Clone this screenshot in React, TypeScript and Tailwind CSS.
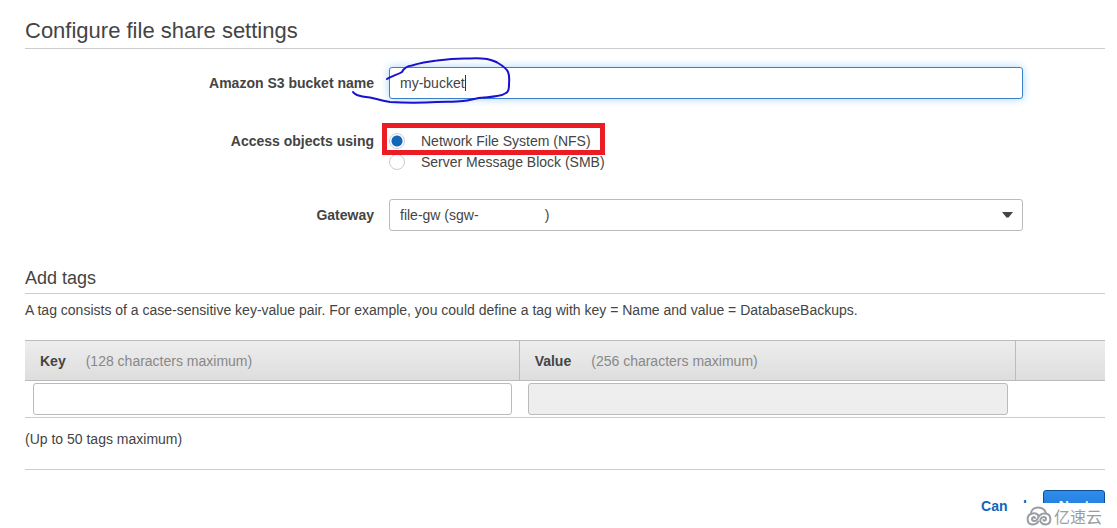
import { useState } from 'react';
import type { ReactNode } from 'react';

interface FieldRowProps {
  label: string;
  htmlFor?: string;
  id?: string;
  children: ReactNode;
}

const protocols = [
  { value: 'nfs', label: 'Network File System (NFS)' },
  { value: 'smb', label: 'Server Message Block (SMB)' },
];

const gateways = ['file-gw (sgw-' + '\u00a0'.repeat(17) + ')'];

function FieldRow({ label, htmlFor, id, children }: FieldRowProps) {
  return (
    <div className="flex gap-[15px] pr-[82px]">
      <label
        id={id}
        htmlFor={htmlFor}
        className="w-[349px] shrink-0 text-right font-bold leading-8"
      >
        {label}
      </label>
      <div className="relative min-w-0 flex-1">{children}</div>
    </div>
  );
}

function PenCircle() {
  return (
    <svg
      className="pointer-events-none absolute -left-10 -top-3 h-[56px] w-[170px]"
      viewBox="0 0 170 56"
      fill="none"
      stroke="#1a10d0"
      strokeWidth="2"
      strokeLinecap="round"
      strokeLinejoin="round"
    >
      <path d="M38 24 C43 21 50 19 53 17 C55 13 58 11 63 10.5 C71 8 79 6.5 88 5.5 C99 4 110 3 121 3.5 C128 3 134 3.5 138 4 C142 5 146 6 149 8 C154 11 158 14 159 17 C161 21 160 26 160 30 C160 34 159 37 157 38 C154 40 151 41 148 41 C143 42 139 42 134 42.5 C127 43 121 45.5 114 46 C105 47 97 46.5 88 47 C72 48 57 48 41 47 C34 46 28 44 21 42.5 C16 42 12 41.5 8 40 C6 39 5 38.5 4 37" />
    </svg>
  );
}

function Watermark() {
  return (
    <div className="absolute bottom-0 right-0 flex h-[25px] w-[109px] items-center bg-white pl-[18px] text-[#9a9da3]">
      <svg
        className="h-5 w-[26px]"
        viewBox="0 0 26 20"
        fill="none"
        stroke="currentColor"
        strokeWidth="2"
        strokeLinecap="round"
      >
        <path d="M5 8 C5 4 8 1.5 12 1.5 C16 1.5 19 4 20 7" />
        <path d="M9 12 C9 10.5 6 10.5 6 13 C6 15.5 10 16 11.5 13 C13 9 16 7 19.5 7.5 C26 8.5 26 18 19.5 18.5 C15.5 18.5 13.5 15.5 14.5 13 C16 10 20 10.5 20 13 C20 15 18 15 17.5 14" />
        <path d="M12.5 10 C11.5 8 9 7 6.5 7.5 C0 8.5 0 18 6.5 18.5 C9.5 18.5 11.5 17 12.5 15.5" />
      </svg>
      <span className="pl-0.5 font-['Noto_Sans_CJK_SC',sans-serif] text-base leading-5">亿速云</span>
    </div>
  );
}

export default function App() {
  const [bucket, setBucket] = useState('my-bucket');
  const [protocol, setProtocol] = useState('nfs');
  const [tagKey, setTagKey] = useState('');

  return (
    <div className="relative min-h-screen overflow-hidden bg-white pl-[25px] pr-3 pt-[19px] font-['Liberation_Sans',Arial,sans-serif] text-sm text-[#444]">
      <h1 className="border-b border-[#ccc] pb-[5px] text-[22px] leading-6">Configure file share settings</h1>

      <div className="pt-[18px]">
        <FieldRow label="Amazon S3 bucket name" htmlFor="bucket">
          <input
            id="bucket"
            type="text"
            value={bucket}
            onChange={(e) => setBucket(e.target.value)}
            className="block h-8 w-full rounded-[3px] border border-[#3b80cb] bg-white px-2.5 shadow-[0_0_8px_#a8d4fb] outline-none"
          />
          <span className="pointer-events-none absolute left-[76px] top-2 h-4 w-px bg-[#333]" />
          <PenCircle />
        </FieldRow>
      </div>

      <div className="pt-[26px]">
        <FieldRow label="Access objects using" id="protocol-label">
          <div role="radiogroup" aria-labelledby="protocol-label" className="pt-[5px]">
            {protocols.map((p) => (
              <label key={p.value} className="flex h-[21px] items-center gap-4">
                <input
                  type="radio"
                  name="protocol"
                  value={p.value}
                  checked={protocol === p.value}
                  onChange={() => setProtocol(p.value)}
                  className="size-4 appearance-none rounded-full border border-[#ccc] bg-white checked:bg-[radial-gradient(circle,#1166bb_5px,white_6px)]"
                />
                {p.label}
              </label>
            ))}
          </div>
          <div className="pointer-events-none absolute -left-[7px] -top-[2px] h-8 w-[223px] border-5 border-[#ec1c24]" />
        </FieldRow>
      </div>

      <div className="pt-[27px]">
        <FieldRow label="Gateway" htmlFor="gateway">
          <select
            id="gateway"
            className="block h-8 w-full appearance-none rounded-[3px] border border-[#bbb] bg-white px-2.5"
          >
            {gateways.map((g) => (
              <option key={g}>{g}</option>
            ))}
          </select>
          <svg
            className="pointer-events-none absolute right-2.5 top-[13px] h-1.5 w-[11px]"
            viewBox="0 0 11 6"
            fill="#444"
          >
            <path d="M0 0 H11 L6.5 5.5 H4.5 Z" />
          </svg>
        </FieldRow>
      </div>

      <h2 className="mt-9 border-b border-[#ccc] pb-1 text-lg leading-[22px]">Add tags</h2>
      <p className="pt-[6px] leading-5">
        A tag consists of a case-sensitive key-value pair. For example, you could define a tag with key = Name and
        value = DatabaseBackups.
      </p>

      <table className="mt-5 w-full table-fixed border-separate border-spacing-0 text-left">
        <thead>
          <tr className="h-[41px] bg-linear-to-b from-[#eee] to-[#ddd]">
            <th className="w-[45.8%] border-y border-r border-[#bbb] p-0 pl-[15px]">
              Key<span className="pl-5 font-normal text-[#888]">(128 characters maximum)</span>
            </th>
            <th className="border-y border-r border-[#bbb] p-0 pl-[15px]">
              Value<span className="pl-5 font-normal text-[#888]">(256 characters maximum)</span>
            </th>
            <th className="w-[89px] border-y border-[#bbb] p-0" aria-label="Actions" />
          </tr>
        </thead>
        <tbody>
          <tr>
            <td className="border-b border-[#ccc] px-2 py-0.5">
              <input
                type="text"
                aria-label="Key"
                value={tagKey}
                onChange={(e) => setTagKey(e.target.value)}
                className="block h-8 w-full rounded-[3px] border border-[#bbb] bg-white px-2.5"
              />
            </td>
            <td className="border-b border-[#ccc] px-2 py-0.5">
              <input
                type="text"
                aria-label="Value"
                disabled
                className="block h-8 w-full rounded-[3px] border border-[#bbb] bg-[#eee] px-2.5"
              />
            </td>
            <td className="border-b border-[#ccc]" />
          </tr>
        </tbody>
      </table>

      <p className="border-b border-[#ccc] pb-5 pt-[11px] leading-5">(Up to 50 tags maximum)</p>

      <div className="flex justify-end gap-4 pt-5 font-bold">
        <button type="button" className="h-8 text-[#1166bb]">
          Cancel
        </button>
        <button
          type="button"
          className="h-8 w-[62px] rounded-[3px] border border-[#0d4f94] bg-linear-to-b from-[#2d8cec] to-[#1f76d2] text-white"
        >
          Next
        </button>
      </div>

      <Watermark />
    </div>
  );
}
